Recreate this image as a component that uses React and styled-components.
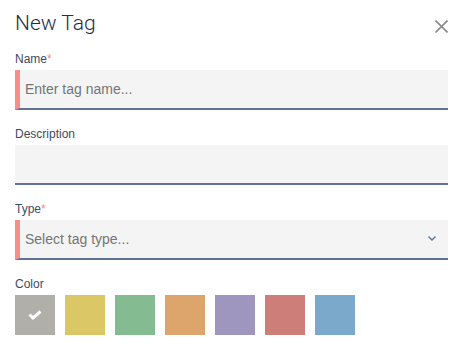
import React from "react";
import styled, { createGlobalStyle } from "styled-components";

const Global = createGlobalStyle`
  html, body { margin: 0; padding: 0; background: #ffffff; }
  body { font-family: "Liberation Sans", Arial, sans-serif; }
  * { box-sizing: border-box; }
`;

const Page = styled.div`
  width: 468px;
  padding: 11px 20px 0 15px;
`;

const Header = styled.div`
  display: flex;
  justify-content: space-between;
  align-items: flex-start;
  height: 24px;
  margin-bottom: 17px;
`;

const Title = styled.h1`
  margin: 0;
  font-family: Roboto, "Liberation Sans", sans-serif;
  font-weight: 300;
  font-size: 21px;
  line-height: 24px;
  color: #262d4a;
`;

const Close = styled.button`
  border: 0;
  padding: 0;
  background: none;
  margin-top: 9px;
  width: 13px;
  height: 13px;
  display: flex;
  cursor: pointer;
`;

const Field = styled.div`
  display: flex;
  flex-direction: column;
  margin-bottom: 17px;
`;

const Label = styled.label`
  font-size: 12px;
  line-height: 14px;
  color: #3b4b68;
  margin-bottom: 4px;
`;

const Star = styled.span`
  color: #f48c89;
`;

const Box = styled.div`
  position: relative;
  height: 40px;
  background: #f4f4f4;
  border-bottom: 2px solid #5e7396;
  border-left: ${(p) => (p.$required ? "5px solid #f68f8a" : "0")};
  display: flex;
  align-items: center;
  padding-left: ${(p) => (p.$required ? "5px" : "10px")};
  font-size: 14px;
  color: #757575;
`;

const Chevron = styled.svg`
  position: absolute;
  right: 12px;
  top: 16px;
`;

const Swatches = styled.div`
  display: flex;
  gap: 10px;
`;

const Swatch = styled.div`
  width: 40px;
  height: 40px;
  background: ${(p) => p.$color};
  display: flex;
  align-items: center;
  justify-content: center;
`;

const colors = ["#b0afaa", "#dbc766", "#84bb90", "#dda46b", "#9e96be", "#ce7e79", "#7ba9cb"];

export default function App() {
  return (
    <>
      <Global />
      <Page>
        <Header>
          <Title>New Tag</Title>
          <Close aria-label="close">
            <svg width="13" height="13" viewBox="0 0 13 13">
              <path d="M0.5 0.5 L12.5 12.5 M12.5 0.5 L0.5 12.5" stroke="#8a8a8a" strokeWidth="1.6" fill="none" />
            </svg>
          </Close>
        </Header>
        <Field>
          <Label>Name<Star>*</Star></Label>
          <Box $required>Enter tag name...</Box>
        </Field>
        <Field>
          <Label>Description</Label>
          <Box />
        </Field>
        <Field>
          <Label>Type<Star>*</Star></Label>
          <Box $required>
            Select tag type...
            <Chevron width="8" height="5" viewBox="0 0 8 5">
              <path d="M0.5 0.5 L4 4 L7.5 0.5" stroke="#5a7396" strokeWidth="1.3" fill="none" />
            </Chevron>
          </Box>
        </Field>
        <Field>
          <Label>Color</Label>
          <Swatches>
            {colors.map((c, i) => (
              <Swatch key={c} $color={c}>
                {i === 0 && (
                  <svg width="14" height="10" viewBox="0 0 14 10">
                    <path d="M1.5 4.5 L5 8 L12.5 1.5" stroke="#ffffff" strokeWidth="3" fill="none" />
                  </svg>
                )}
              </Swatch>
            ))}
          </Swatches>
        </Field>
      </Page>
    </>
  );
}
